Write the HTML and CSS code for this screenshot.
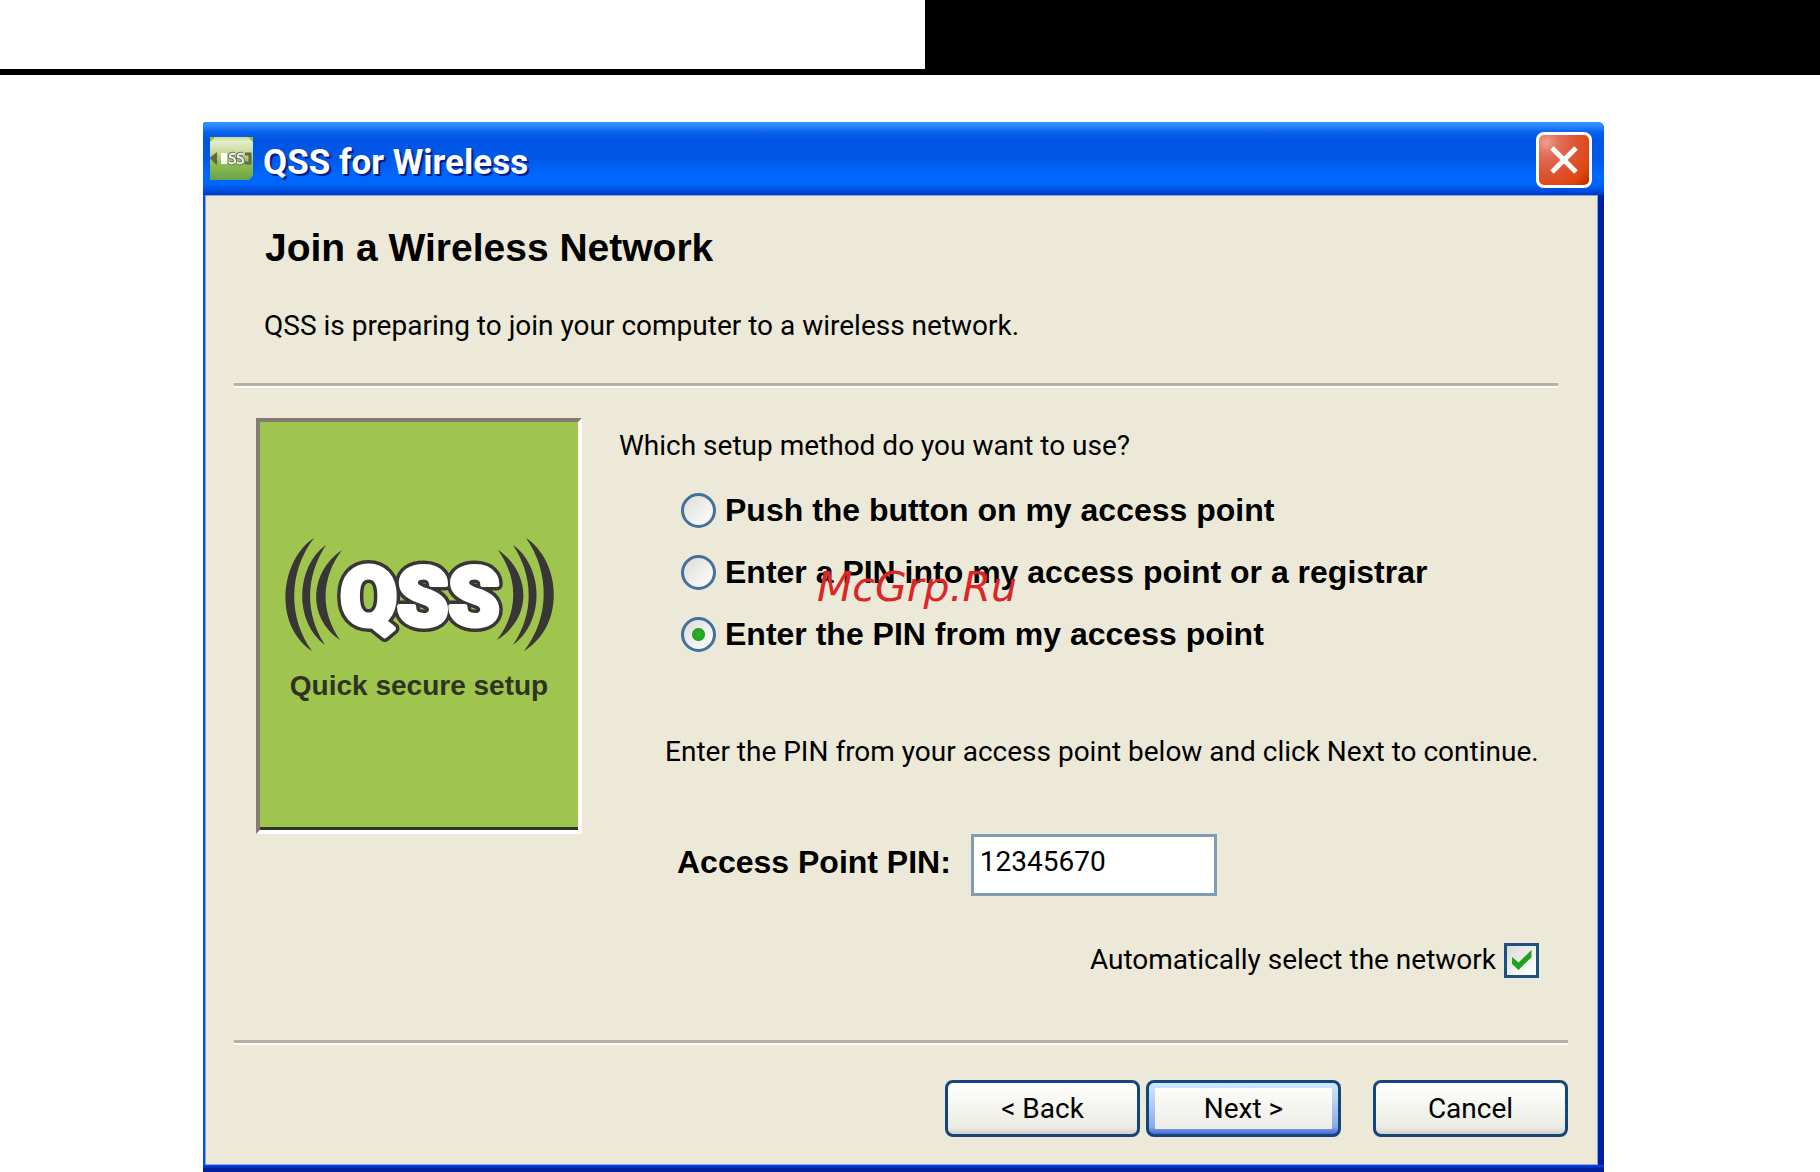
FILE: index.html
```html
<!DOCTYPE html>
<html lang="en">
<head>
    <meta charset="UTF-8">
    <meta name="viewport" content="width=device-width, initial-scale=1.0">
    <title>QSS for Wireless</title>
    <link rel="stylesheet" href="styles.css">
</head>
<body>
    <div class="page-header">
        <div class="page-header-dark"></div>
    </div>

    <div class="window">
        <div class="title-bar">
            <svg class="title-icon" viewBox="0 0 43 43">
                <defs>
                    <linearGradient id="iconBg" x1="0" y1="0" x2="0" y2="1">
                        <stop offset="0" stop-color="#c5da8c"/>
                        <stop offset="0.1" stop-color="#e4eccb"/>
                        <stop offset="0.35" stop-color="#c9dc9c"/>
                        <stop offset="0.6" stop-color="#94bf50"/>
                        <stop offset="1" stop-color="#68a348"/>
                    </linearGradient>
                </defs>
                <path d="M0 0H43V39L39 43H0Z" fill="url(#iconBg)"/>
                <path d="M0 0H5L0 5ZM43 0H38L43 5Z" fill="#8fbf3c"/>
                <path d="M1 21L6 17V26ZM7 18Q4 21 7 25" fill="#5e6b48" stroke="#5e6b48" stroke-width="2"/>
                <path d="M35 17H40V26H35" fill="none" stroke="#5e6b48" stroke-width="3"/>
                <rect x="11" y="16" width="6" height="11" fill="#fff"/>
                <path d="M25 17Q19 16 20 20Q26 21 25 25Q21 28 19 25M33 17Q27 16 28 20Q34 21 33 25Q29 28 27 25" fill="none" stroke="#6d7560" stroke-width="4"/>
                <path d="M25 17Q19 16 20 20Q26 21 25 25Q21 28 19 25M33 17Q27 16 28 20Q34 21 33 25Q29 28 27 25" fill="none" stroke="#eef0e8" stroke-width="2"/>
            </svg>
            <span class="title-text">QSS for Wireless</span>
            <button class="close-btn" type="button" aria-label="Close">
                <svg viewBox="0 0 30 30"><path d="M3 3L27 27M27 3L3 27" stroke="#fff" stroke-width="5"/></svg>
            </button>
        </div>

        <form class="content">
            <h1>Join a Wireless Network</h1>
            <p class="intro">QSS is preparing to join your computer to a wireless network.</p>
            <div class="line line-top"></div>

            <div class="main">
                <svg class="logo" viewBox="-1 -1 318 408">
                    <g fill="#383637">
                        <path d="M53 115C19 137 12 202 51 228C27 195 27 149 53 115Z"/>
                        <path d="M65 122C35 143 32 198 64 222C44 191 44 154 65 122Z"/>
                        <path d="M81 127C49 148 45 194 79 217C59 188 60 155 81 127Z"/>
                        <path d="M265 115C299 137 306 202 263 228C289 195 289 149 265 115Z"/>
                        <path d="M252 122C282 143 285 198 252 222C273 191 273 154 252 122Z"/>
                        <path d="M237 127C269 148 273 194 236 217C258 188 257 155 237 127Z"/>
                    </g>
                    <text class="logo-name logo-outline" x="159" y="202">QSS</text>
                    <text class="logo-name logo-face" x="159" y="202" aria-hidden="true">QSS</text>
                    <text class="logo-caption" x="158" y="272">Quick secure setup</text>
                </svg>

                <div class="setup">
                    <p>Which setup method do you want to use?</p>
                    <div class="options">
                        <div class="option">
                            <input type="radio" name="method" id="push">
                            <label for="push">Push the button on my access point</label>
                        </div>
                        <div class="option">
                            <input type="radio" name="method" id="enterInto">
                            <label for="enterInto">Enter a PIN into my access point or a registrar</label>
                        </div>
                        <div class="option">
                            <input type="radio" name="method" id="enterFrom" checked>
                            <label for="enterFrom">Enter the PIN from my access point</label>
                        </div>
                    </div>
                    <p class="hint">Enter the PIN from your access point below and click Next to continue.</p>
                    <div class="pin-row">
                        <label for="pin">Access Point PIN:</label>
                        <input type="text" id="pin" value="12345670">
                    </div>
                    <div class="auto-row">
                        <label for="auto">Automatically select the network</label>
                        <input type="checkbox" id="auto" checked>
                    </div>
                </div>
            </div>

            <div class="line"></div>
            <div class="buttons">
                <button type="button">&lt; Back</button>
                <button type="button" class="default">Next &gt;</button>
                <button type="button" class="cancel">Cancel</button>
            </div>
        </form>
    </div>

    <div class="watermark">McGrp.Ru</div>
</body>
</html>
```

FILE: styles.css
```css
* {
    box-sizing: border-box;
}
body {
    margin: 0;
    min-height: 100vh;
    display: flex;
    flex-direction: column;
    position: relative;
    background: #fff;
    color: #000;
    font-family: Roboto, sans-serif;
    font-size: 28px;
    line-height: 40px;
}
h1, p {
    margin: 0;
}
.page-header {
    height: 75px;
    border-bottom: 6px solid #000;
    display: flex;
    justify-content: flex-end;
}
.page-header-dark {
    width: 895px;
    background: #000;
}

/* window */
.window {
    flex: 1;
    display: flex;
    flex-direction: column;
    margin: 47px 216px 0 203px;
    background: linear-gradient(#0a45e6, #001ea0 4px) bottom / 100% 7px no-repeat, linear-gradient(90deg, #0a4be0 50%, #001ea0 50%);
    padding: 0 6px 7px 2px;
    border-radius: 3px 6px 0 0;
}
.title-bar {
    display: flex;
    align-items: center;
    height: 73px;
    margin: 0 -6px 0 -2px;
    padding: 2px 12px 0 7px;
    border-radius: 3px 6px 0 0;
    background: linear-gradient(#3a93ff 0, #2a88ff 4px, #0862ee 10px, #0054e3 18px, #0058e8 36px, #0068ff 54px, #0066fc 62px, #0050e0 68px, #0038c0 73px);
}
.title-icon {
    width: 43px;
    height: 43px;
    margin-bottom: 2px;
}
.title-text {
    flex: 1;
    margin: 6px 0 0 10px;
    color: #fff;
    font-size: 35px;
    font-weight: bold;
    text-shadow: 2px 2px 1px #0a1883;
}
.close-btn {
    display: flex;
    align-items: center;
    justify-content: center;
    width: 56px;
    height: 56px;
    padding: 0;
    border: 3px solid #fff;
    border-radius: 8px;
    background: radial-gradient(circle at 15% 15%, #eda090 0, #e2705a 20%, #dd5436 50%, #e0450f 78%, #b02c04 100%);
    cursor: pointer;
}
.close-btn svg {
    width: 30px;
    height: 30px;
}

/* dialog content */
.content {
    flex: 1;
    background: #ece9d8;
    border: 1px solid #7fa6ea;
    padding: 32px 29px 25px 28px;
}
h1 {
    margin-left: 31px;
    font-family: "Liberation Sans", Arial, sans-serif;
    font-size: 39px;
}
.intro {
    margin: 38px 0 37px 30px;
}
.line {
    height: 5px;
    border-top: 3px solid #b5b09f;
    border-bottom: 2px solid #fff;
}
.line-top {
    margin-right: 10px;
}
.main {
    display: flex;
    align-items: flex-start;
    padding: 30px 0 60px 22px;
}
.logo {
    flex: none;
    width: 326px;
    height: 416px;
    border: 4px solid;
    border-color: #827d70 #fff #fff #827d70;
    background: #9fc54f;
    box-shadow: inset 0 -3px 0 #2c3a2c;
}
.logo-name {
    font-size: 82px;
    font-weight: 900;
    text-anchor: middle;
    stroke-linejoin: round;
}
.logo-outline {
    fill: #383637;
    stroke: #383637;
    stroke-width: 12px;
}
.logo-face {
    fill: #fff;
    stroke: #fff;
    stroke-width: 5px;
}
.logo-caption {
    font-family: "Liberation Sans", Arial, sans-serif;
    font-size: 28px;
    font-weight: bold;
    fill: #2f3420;
    text-anchor: middle;
}
.setup {
    flex: 1;
    padding: 8px 0 0 37px;
}
.options {
    display: flex;
    flex-direction: column;
    gap: 22px;
    margin: 24px 0 0 62px;
}
.option {
    display: flex;
    align-items: center;
    gap: 9px;
}
.option label, .pin-row label {
    font-family: "Liberation Sans", Arial, sans-serif;
    font-size: 32px;
    font-weight: bold;
}
input {
    margin: 0;
    appearance: none;
    flex: none;
}
input[type="radio"] {
    width: 35px;
    height: 35px;
    border: 3px solid #44709c;
    border-radius: 50%;
    background: linear-gradient(135deg, #dcdcd7, #fff);
}
input[type="radio"]:checked {
    background: radial-gradient(circle, #2fb52f 0, #21a121 6px, transparent 7px), linear-gradient(135deg, #dcdcd7, #fff);
}
.hint {
    margin: 78px 0 62px 46px;
}
.pin-row {
    display: flex;
    align-items: center;
    gap: 20px;
    margin-left: 58px;
}
.pin-row label {
    margin-bottom: 6px;
}
.pin-row input {
    width: 246px;
    height: 62px;
    border: 3px solid #7f9db9;
    background: #fff;
    padding: 0 6px 8px;
    font-family: inherit;
    font-size: 28px;
}
.auto-row {
    display: flex;
    align-items: center;
    justify-content: flex-end;
    gap: 8px;
    margin: 44px 29px 0 0;
}
input[type="checkbox"] {
    width: 35px;
    height: 35px;
    border: 3px solid #1c5180;
    background: linear-gradient(135deg, #dcdcd7, #fff);
    display: grid;
    place-items: center;
}
input[type="checkbox"]:checked::before {
    content: "";
    width: 20px;
    height: 20px;
    background: #21a121;
    clip-path: polygon(0 32%, 35% 62%, 100% 0, 100% 36%, 35% 100%, 0 68%);
}
.buttons {
    display: flex;
    justify-content: flex-end;
    gap: 6px;
    margin-top: 35px;
}
.buttons button {
    width: 195px;
    height: 57px;
    border: 3px solid #15467b;
    border-radius: 8px;
    background: linear-gradient(#fff, #f4f4ef 50%, #ecebe5 86%, #d6d0c5);
    font-family: inherit;
    font-size: 28px;
    padding: 0;
    cursor: pointer;
}
.buttons .default {
    background: linear-gradient(#fcfcfa, #edece6) padding-box center / 177px 41px no-repeat, linear-gradient(#cee7ff, #bcd4f6 30%, #89ade4 85%, #4a68d8);
}
.buttons .cancel {
    margin-left: 26px;
}

.watermark {
    position: absolute;
    top: 567px;
    left: 817px;
    color: #dc2626;
    font-family: "DejaVu Sans", sans-serif;
    font-size: 41px;
    font-style: italic;
}
```
